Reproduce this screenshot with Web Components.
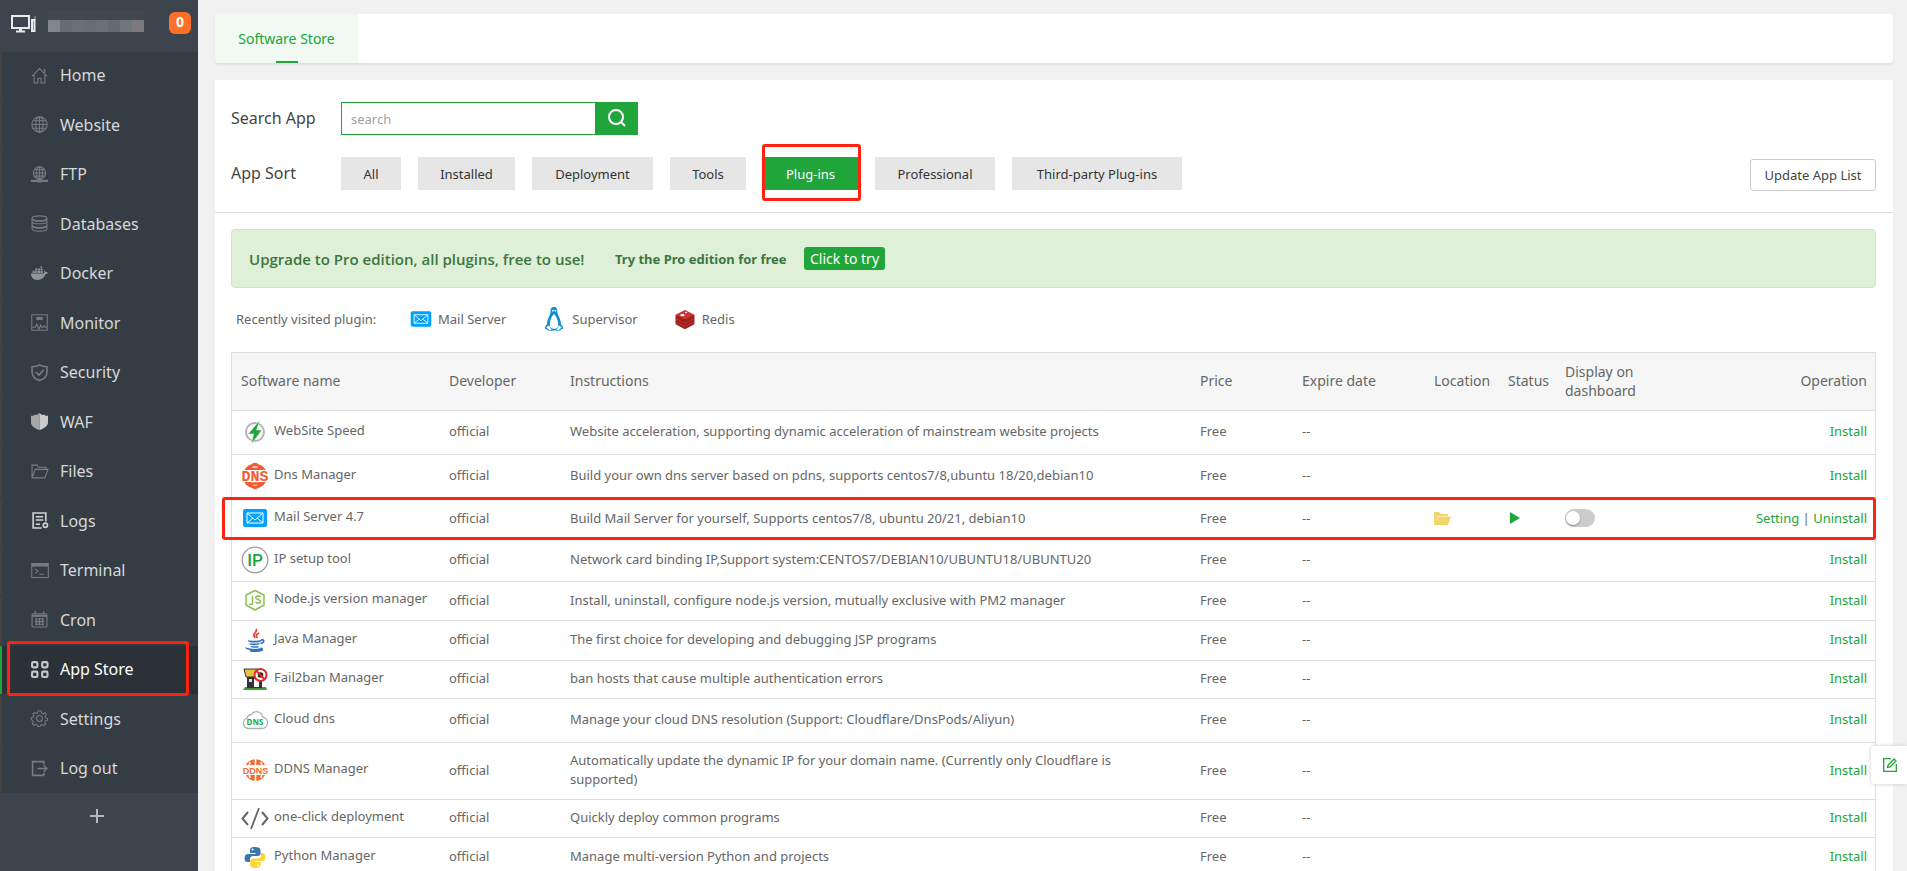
<!DOCTYPE html>
<html lang="en">
<head>
<meta charset="utf-8">
<title>Software Store</title>
<style>
  body { margin: 0; background: #f1f1f1; color: #666; font: 13px/20px "Noto Sans", "Open Sans", sans-serif; }
</style>
</head>
<body>
<app-shell>
  <side-nav slot="nav"></side-nav>
  <page-tabs></page-tabs>
  <store-card>
    <store-filter slot="filter"></store-filter>
    <promo-banner>
      <span slot="lead">Upgrade to Pro edition, all plugins, free to use!</span>
      <span slot="offer">Try the Pro edition for free</span>
      <span slot="action">Click to try</span>
    </promo-banner>
    <recent-plugins></recent-plugins>
    <plugin-table></plugin-table>
  </store-card>
  <feedback-tab slot="float"></feedback-tab>
</app-shell>

<script>
const define = (name, css, html, init) => customElements.define(name, class extends HTMLElement {
  connectedCallback() {
    if (this.shadowRoot) return;
    const root = this.attachShadow({ mode: 'open' });
    const tpl = document.createElement('template');
    tpl.innerHTML = `<style>*{box-sizing:border-box}${css}</style>${typeof html === 'function' ? html(this) : html}`;
    root.append(tpl.content.cloneNode(true));
    if (init) init(root, this);
  }
});

/* Line icons of the sidebar, on a 16px grid */
const NAV = {
  home: '<path d="M1 8.5 8 1.5l7 7M3 7.5V15h3.5v-4.500h3V15H13V7.500M11.500 2.500h1.500v3" />',
  web: '<circle cx="8" cy="8" r="7.200"/><ellipse cx="8" cy="8" rx="3.500" ry="7.200"/><path d="M8 1v14M1 8h14M2 4.500h12M2 11.500h12"/>',
  ftp: '<circle cx="8" cy="6.500" r="5.800"/><ellipse cx="8" cy="6.500" rx="2.800" ry="5.800"/><path d="M8 1v11M2 6.500h12M3 3.500h10M3 9.500h10"/><path d="M0 14h16" stroke-width="2"/><path d="M6 14h4" stroke-width="3"/>',
  db: '<ellipse cx="8" cy="3" rx="7" ry="2.200"/><path d="M1 3v10c0 1.200 3 2.300 7 2.300s7-1.100 7-2.300V3M1 6c0 1.200 3 2.300 7 2.300S15 7.200 15 6M1 9.500c0 1.200 3 2.300 7 2.300s7-1.100 7-2.300"/><path d="M1.500 4.500c2 1.500 11 1.500 13 0M1.500 11c3 2 10 2 13 0" stroke-width="1.500"/>',
  docker: '<g fill="#929598" stroke="none"><path d="M0 8h12c.8-.5.8-2 .2-3 1 .3 1.500 1 1.600 1.700.8-.2 1.600 0 2.200.5-.5 1-1.400 1.300-2.300 1.300C12.500 12 10 14 6 14 2.500 14 0 12 0 8z"/><path d="M1.500 5.500h2v2h-2zM4 5.500h2v2H4zM6.500 5.500h2v2h-2zM9 5.500h2v2H9zM4 3.200h2v1.800H4zM6.500 3.200h2v1.800h-2zM9 1.500h1.500v1.500H9zM9 3.500h2v1.500H9z"/></g>',
  monitor: '<path d="M.700.700h14.600v14.600H.700z"/><path d="M5 3.500h6M5 5h6" stroke-width="1.500"/><path d="M1 12.500h3l1.500-3 2 5 1.500-4 1 2h1.500l1-1.500 1 1.500H15"/>',
  shield: '<path d="M8 .8c2 1.500 4.500 1.800 7 1.800V8c0 4-3 6.200-7 7.400C4 14.200 1 12 1 8V2.600c2.500 0 5-.3 7-1.800z" stroke-width="1.500"/><path d="m4.500 7.500 3 3 4.500-5" stroke-width="1.500"/>',
  waf: '<path d="M8 0v16C3.500 14.800 0 12 0 9V2.500c2 .5 3 0 3.500-1 1 .6 3 .3 4.500-1.500z" fill="#a4a6a8" stroke="none"/><path d="M8 0v16c4.500-1.200 8-4 8-7V2.500c-2 .5-3 0-3.500-1-1 .6-3 .3-4.500-1.500z" fill="#c9cbcc" stroke="none"/>',
  files: '<path d="M1 14V2h5l1 2h7v2M1 14 4 6h12l-3 8z"/>',
  logs: '<path d="M14 9V1H2v14h8M4.500 4.500h7M4.500 7.500h7M4.500 11.500h4" stroke-width="1.500"/><circle cx="13.500" cy="12.500" r="2" stroke-width="1.500"/>',
  term: '<path d="M.700 1.500h15.600v13H.700z" /><path d="M.700 3h15.600" stroke-width="2.500"/><path d="m4 6.500 2.500 2.300L4 11M8 11.500h4"/>',
  cron: '<rect x="1" y="2.500" width="14" height="12.500" rx="1"/><path d="M1 4.500h14" stroke-width="2"/><path d="M4 0v3M12 0v3M3.500 7.500h9M3.500 10h9M3.500 12.500h9M5 6.500v7M8 6.500v7M11 6.500v7"/>',
  apps: '<g stroke-width="2"><rect x="1" y="1" width="5" height="5" rx="1"/><rect x="10.500" y="1" width="5" height="5" rx="1"/><rect x="1" y="10" width="5" height="5" rx="1"/><rect x="10.500" y="10" width="5" height="5" rx="1"/></g>',
  gear: '<path d="M6.500 1h3l.5 2 1.500.6L13.300 2.600l1 1.600L13.300 6l.3 1.200 2 .8v1.500l-2 .7-.7 1.500.9 1.700-1.600 1.300-1.800-1-1.200.4-.7 1.500h-2l-.8-1.600-1.300-.5-1.800.9-1.300-1.500.9-1.700-.5-1.200-1.500-.8V7.200l1.700-.5.7-1.400-.8-1.600L3.400 2.500 5 3.300 6.200 2.800z"/><circle cx="8" cy="8" r="2.800"/>',
  out: '<path d="M12 4V1.500H1.500v13H12V12" stroke-width="1.500"/><path d="M6 8h9M12 5l3 3-3 3" stroke-width="1.300"/>'
};

/* Product icons, drawn on a 28px grid */
const MAIL = '<rect x="2" y="5" width="24" height="18" rx="2" fill="#00a2ff"/><path d="M6 9h16v10H6zM6 9l8 7 8-7M6 19l6-5M22 19l-6-5" fill="none" stroke="#fff" stroke-width="1"/>';
const T = (x, y, s, c, t, f = 'Noto Sans', w = 700) => `<text x="${x}" y="${y}" font-size="${s}" font-family="${f}" font-weight="${w}" text-anchor="middle" fill="${c}">${t}</text>`;
const APP = {
  speed: '<circle cx="14" cy="14" r="9" fill="none" stroke="#b5b5b5" stroke-width="2"/><path d="M19 2 7 16h5.500l-2 10 10.500-14h-5.500z" fill="#20a53a" stroke="#fff" stroke-width=".500"/>',
  dns: '<g fill="none" stroke="#f4592f" stroke-width="2.500"><path d="M4.500 8.500a11 11 0 0 1 19 0M4.500 19.500a11 11 0 0 0 19 0M8.500 9c1-4 3-7 5.500-7s4.500 3 5.500 7M8.500 19c1 4 3 7 5.500 7s4.500-3 5.500-7M5 7h18M5 21.500h18"/></g><rect x="0" y="8" width="28" height="12" fill="#fff"/>' + T(14, 19, 15, '#f4592f', 'DNS', 'Liberation Mono'),
  mail: MAIL,
  ip: '<circle cx="14" cy="14" r="12.800" fill="#fff" stroke="#a0a0a0" stroke-width="1.300"/>' + T(14, 20, 17, '#20a53a', 'IP', 'Roboto', 500),
  node: '<path d="M14 4.500 23 9v10l-9 5-9-5V9z" fill="none" stroke="#8cc152" stroke-width="1.500" stroke-linejoin="round"/><path d="M11.500 10v7c0 2-2.500 2-3.200.500M19.500 11c-1-1.500-5-1.200-4.700 1 .2 2 4.700 1 4.700 3.500 0 2.200-4.200 2.300-5 .2" fill="none" stroke="#8cc152" stroke-width="1.600"/>',
  java: '<g fill="none" stroke="#2f72b9" stroke-width="1.600"><path d="M8 14.500c-1 1.500 10 1.500 12 0M9 17.500c0 1.200 8 1.200 9.500 0M10 20.300c1 1 6 1 7.500 0M5.500 21.500c-1.500 2 12 3.500 16 .5M9 24.700c3 .6 9 .6 13-1M20 14c4-1 3.500 3-.5 3.500"/></g><path d="M15 3c2.500 3-5 4-1 9M18 7c-3 1.500-3.500 2.500-1.500 5" fill="none" stroke="#e8453c" stroke-width="1.800"/>',
  ban: '<path d="M4 22h21l1 3H2z" fill="#3c9a3c"/><path d="M6 12h15v11H6z" fill="#333"/><path d="M13 14h5v8h-5z" fill="#fff"/><path d="M8 14h3v3H8z" fill="#ddd"/><path d="M3 4h14l4 8H5z" fill="#e8c341" stroke="#333"/><circle cx="19.500" cy="10" r="6" fill="#fff" stroke="#e02b2b" stroke-width="2"/><circle cx="19.500" cy="10" r="2.800" fill="#222"/><path d="m15.500 6 8 8" stroke="#e02b2b" stroke-width="2"/>',
  cloud: '<path d="M7 22.500a5.500 5.500 0 0 1-1-10.500 5 5 0 0 1 4.500-3.500 6 6 0 0 1 11 2.500 5.800 5.800 0 0 1 0 11.500z" fill="none" stroke="#b0b0b0" stroke-width="1.300"/>' + T(14, 19, 8, '#20a53a', 'DNS'),
  ddns: '<circle cx="14.500" cy="14" r="10.800" fill="#f16c30"/><path d="M14.500 3v22M9 6c-1.500 5-1.500 11 0 16M20 6c1.500 5 1.500 11 0 16" fill="none" stroke="#fff" stroke-width="1.600"/><rect x="1" y="9" width="27" height="10" fill="#fff"/>' + T(14.5, 17.5, 9, '#f16c30', 'DDNS', 'Liberation Sans'),
  code: '<path d="m7 8-5.500 6.500L7 21M21 8l5.500 6.500L21 21" fill="none" stroke="#666" stroke-width="2"/><path d="M18 4 10 25" stroke="#666" stroke-width="1.800"/>',
  py: '<path d="M14 4c-4 0-5 1-5 3v3h5.500v1H7c-2.500 0-3.500 2-3.500 4.500S4.500 19 6.500 19H9v-3c0-2 1.200-3 3-3h5c1.500 0 2.500-1 2.500-2.500V7c0-2-2-3-5.500-3z" fill="#3d77a8"/><path d="M14.500 25c4 0 5-1 5-3v-3H14v-1h7.500c2.500 0 3-2 3-4 0-2.500-1-4-3-4H20v2.500c0 2-1.200 3-3 3h-5c-1.500 0-2.800 1-2.800 2.500v4c0 2 2 3 5.300 3z" fill="#ffd43b"/><circle cx="11.500" cy="6.500" r="1" fill="#fff"/><circle cx="17" cy="22.500" r="1" fill="#fff"/>',
  tux: '<path d="M14 1c-3 0-4 2-3.700 5C10.500 10 6.500 13 6.500 20c-1 .7-3 2.500-2 4.500 2 1 4 2.500 6 2.500 1.500-.7 5.500-.7 7 0 2 0 4-1.500 6-2.500 1-2-1-3.800-2-4.500 0-7-4-10-4-14C17.700 3 17 1 14 1z" fill="#0a8fd0"/><path d="M14 9c-2 1-5 7-4.500 13 2 3.500 7 3.500 9 0C19 16 16 10 14 9z" fill="#fff"/><path d="m5.500 23 3-2 3 4.500-2 .8zM22.500 23l-3-2-3 4.500 2 .8z" fill="#fff"/><circle cx="12.700" cy="5" r="1" fill="#fff"/><circle cx="15.500" cy="5" r="1" fill="#fff"/>',
  redis: '<path d="M3 9v11l11 6 11-6V9z" fill="#9d1f1b"/><path d="m3 9 11-5.500L25 9l-11 5.500z" fill="#c93530"/><path d="m3 13.500 11 5.500 11-5.500M3 17.500 14 23l11-5.500" fill="none" stroke="#bf3832" stroke-width="1"/><ellipse cx="11" cy="9.500" rx="2.500" ry="1.300" fill="#fff"/><path d="m14 5.500 3 1-2.500 1z" fill="#fff"/>'
};
const svg = (body, size = 28, box = 28) => `<svg width="${size}" height="${size}" viewBox="0 0 ${box} ${box}" aria-hidden="true">${body}</svg>`;

define('app-shell', `
  :host { display: flex; height: 100vh; overflow: hidden; }
  main { flex: 1; min-width: 0; padding: 14px 14px 0 17px; display: flex; flex-direction: column; gap: 17px; }
  ::slotted(store-card) { flex: 1 0 auto; }
`, '<slot name="nav"></slot><main><slot></slot></main><slot name="float"></slot>');

define('nav-item', `
  :host { display: block; }
  a { display: flex; align-items: center; gap: 12px; height: 48px; padding: 0 0 2px 29px; border-left: 2px solid #453f3e;
      color: #d6d8d9; font-size: 16px; text-decoration: none; position: relative; }
  svg { width: 17px; height: 17px; fill: none; stroke: currentColor; color: #777c80; flex: none; overflow: visible; }
  :host([bright]) svg { color: #d0d2d3; }
  :host([active]) a { background: #2c3138; border-left-color: #20a53a; color: #fff; }
  :host([active]) svg { color: #c5c7c9; }
  .mark { position: absolute; inset: -5px 9px -2px 5px; border: 3px solid #ff2112; border-radius: 3px; pointer-events: none; }
`, el => `<a href="#">${svg(NAV[el.getAttribute('icon')], 17, 16)}<slot></slot>${el.hasAttribute('active') ? '<span class="mark"></span>' : ''}</a>`);

const MENU = [['home', 'Home'], ['web', 'Website'], ['ftp', 'FTP'], ['db', 'Databases'], ['docker', 'Docker'], ['monitor', 'Monitor'],
  ['shield', 'Security'], ['waf', 'WAF'], ['files', 'Files'], ['logs', 'Logs', 'bright'], ['term', 'Terminal'], ['cron', 'Cron'],
  ['apps', 'App Store', 'active'], ['gear', 'Settings'], ['out', 'Log out']];
define('side-nav', `
  :host { display: flex; flex-direction: column; width: 198px; flex: none; background: #3c444d; }
  header { display: flex; align-items: center; height: 52px; padding: 0 7px 14px 11px; }
  .host { flex: none; width: 25px; height: 18px; margin-top: 10px; }
  .name { display: flex; margin: 0 auto 0 12px; padding-top: 14px; }
  .name i { width: 12px; height: 12px; box-shadow: 0 -11px #414850; }
  .badge { width: 22px; height: 22px; margin-top: 8px; border-radius: 6px; background: #ff6f28; color: #fff; font-weight: 700; font-size: 14px; line-height: 20px; text-align: center; }
  nav { display: flex; flex-direction: column; justify-content: space-between; height: 741px; background: #353d44; }
  button { border: 0; background: none; padding: 0; width: 22px; height: 22px; margin: 12px 0 0 86px; color: #b4b6b8; }
  svg { display: block; }
`, `<header>
  <svg class="host" viewBox="0 0 25 18" fill="none" stroke="#e8eaeb" aria-hidden="true"><rect x="1" y="1" width="17" height="12" stroke-width="2"/><path d="M5 16.500h9M8 14.500h3" stroke-width="2"/><path d="M21 5h2.500v11H21z" stroke-width="2"/><path d="M24 1v4" stroke-width="1" opacity=".6"/></svg>
  <span class="name">${['#7f868d', '#696b73', '#6a6f7a', '#676d79', '#6b717a', '#666b70', '#6e787c', '#7d797e'].map(c => `<i style="background:${c}"></i>`).join('')}</span>
  <span class="badge">0</span></header>
  <nav>${MENU.map(([i, t, a = '']) => `<nav-item icon="${i}" ${a}>${t}</nav-item>`).join('')}</nav>
  <button aria-label="Add menu item"><svg width="22" height="22" viewBox="0 0 22 22" aria-hidden="true"><path d="M11 4v14M4 11h14" stroke="currentColor" stroke-width="2"/></svg></button>`);

define('page-tabs', `
  :host { display: flex; height: 49px; flex: none; background: #fff; border-radius: 4px; box-shadow: 0 2px 2px #e0e0e0; }
  a { display: flex; flex-direction: column; align-items: center; justify-content: space-between; padding-top: 15px; width: 143px;
      background: #f0f9f2; color: #20a53a; font-size: 14px; text-decoration: none; border-radius: 4px 0 0 4px; }
  a::after { content: ""; width: 22px; height: 2px; background: #20a53a; }
`, '<a href="#">Software Store</a>');

define('store-card', `
  :host { display: block; background: #fff; }
  .body { padding: 16px 17px 0 16px; }
`, '<slot name="filter"></slot><div class="body"><slot></slot></div>');

const SORTS = [['All', 60], ['Installed', 97], ['Deployment', 121], ['Tools', 76], ['Plug-ins', 95], ['Professional', 120], ['Third-party Plug-ins', 170]];
define('store-filter', `
  :host { display: block; padding: 22px 17px 22px 16px; border-bottom: 1px solid #ddd; }
  .row { display: flex; align-items: center; height: 33px; }
  .row + .row { margin-top: 22px; }
  .cap { width: 110px; flex: none; font-size: 16px; color: #444; padding-bottom: 2px; }
  input { width: 254px; height: 33px; border: 1px solid #20a53a; border-right: 0; padding: 0 9px; font: inherit; color: #444; outline: 0; }
  input::placeholder { color: #a0a0a0; opacity: 1; }
  .go { width: 43px; height: 33px; border: 0; padding: 0 0 2px; background: #20a53a; display: grid; place-items: center; }
  .sorts { display: flex; gap: 17px; flex: 1; }
  button { font: inherit; color: #333; }
  .sort { height: 33px; border: 0; padding: 0; background: #e6e6e6; position: relative; }
  .sort[aria-pressed=true] { background: #20a53a; color: #fff; }
  .mark { position: absolute; inset: -13px -3px -11px -1px; border: 3px solid #ff2112; border-radius: 3px; }
  .update { width: 126px; height: 32px; margin-top: 3px; padding: 0; background: #fff; border: 1px solid #ccc; border-radius: 3px; color: #444; }
`, `<div class="row"><label class="cap" for="q">Search App</label><input id="q" placeholder="search">
  <button class="go" aria-label="Search"><svg width="20" height="20" viewBox="0 0 20 20" fill="none" stroke="#fff" stroke-width="2" aria-hidden="true"><circle cx="9" cy="9" r="7"/><path d="m14 14 4 4"/></svg></button></div>
  <div class="row"><span class="cap">App Sort</span><div class="sorts">${SORTS.map(([t, w]) => `<button class="sort" style="width:${w}px" aria-pressed="${t === 'Plug-ins'}">${t}${t === 'Plug-ins' ? '<span class="mark"></span>' : ''}</button>`).join('')}</div>
  <button class="update">Update App List</button></div>`);

define('promo-banner', `
  :host { display: flex; align-items: center; height: 59px; padding: 0 17px; background: #dff0d8; border: 1px solid #d0e8c2; border-radius: 4px; color: #3c763d; font-weight: 700; box-sizing: border-box; }
  .lead { min-width: 338px; font-family: "Open Sans", sans-serif; font-weight: 600; font-size: 15px; }
  .offer { min-width: 177px; margin: 0 12px 0 28px; }
  button { height: 23px; width: 81px; padding: 0; border: 0; border-radius: 3px; background: #20a53a; color: #fff; font: inherit; font-weight: 400; font-size: 14px; line-height: 20px; }
`, '<span class="lead"><slot name="lead"></slot></span><span class="offer"><slot name="offer"></slot></span><button><slot name="action"></slot></button>');

define('recent-plugins', `
  :host { display: flex; align-items: center; height: 64px; padding: 0 0 2px 5px; box-sizing: border-box; }
  .cap { width: 173px; }
  a { display: flex; align-items: center; gap: 5px; color: inherit; text-decoration: none; }
  a + a { margin-left: 35px; }
`, `<span class="cap">Recently visited plugin:</span>
  <a href="#">${svg(APP.mail, 24)}Mail Server</a><a href="#">${svg(APP.tux, 26)}Supervisor</a><a href="#">${svg(APP.redis, 24)}Redis</a>`);

const ROWS = [
  ['speed', 'WebSite Speed', 'Website acceleration, supporting dynamic acceleration of mainstream website projects', 44],
  ['dns', 'Dns Manager', 'Build your own dns server based on pdns, supports centos7/8,ubuntu 18/20,debian10', 44],
  ['mail', 'Mail Server 4.7', 'Build Mail Server for yourself, Supports centos7/8, ubuntu 20/21, debian10', 41],
  ['ip', 'IP setup tool', 'Network card binding IP,Support system:CENTOS7/DEBIAN10/UBUNTU18/UBUNTU20', 42],
  ['node', 'Node.js version manager', 'Install, uninstall, configure node.js version, mutually exclusive with PM2 manager', 39],
  ['java', 'Java Manager', 'The first choice for developing and debugging JSP programs', 40],
  ['ban', 'Fail2ban Manager', 'ban hosts that cause multiple authentication errors', 38],
  ['cloud', 'Cloud dns', 'Manage your cloud DNS resolution (Support: Cloudflare/DnsPods/Aliyun)', 44],
  ['ddns', 'DDNS Manager', 'Automatically update the dynamic IP for your domain name. (Currently only Cloudflare is supported)', 57],
  ['code', 'one-click deployment', 'Quickly deploy common programs', 38],
  ['py', 'Python Manager', 'Manage multi-version Python and projects', 40]];
define('plugin-table', `
  :host { display: block; }
  table { width: 100%; table-layout: fixed; border-collapse: separate; border-spacing: 0; border: 1px solid #ddd; border-bottom: 0; }
  th, td { padding: 0 8px 2px; text-align: left; vertical-align: middle; font-weight: 400; border-bottom: 1px solid #ddd; }
  th { height: 58px; background: #f6f6f6; font-size: 14px; line-height: 19px; }
  td { line-height: 19px; }
  td:first-child, th:first-child { padding-left: 9px; }
  .op { text-align: right; white-space: nowrap; }
  th.tight { padding-right: 0; }
  td.info { padding-right: 32px; }
  tr { position: relative; }
  .name { display: flex; align-items: center; gap: 5px; white-space: nowrap; }
  .name span { padding-bottom: 3px; }
  svg { display: block; flex: none; }
  a { color: #20a53a; text-decoration: none; }
  input { appearance: none; display: block; width: 30px; height: 18px; margin: 0; border-radius: 9px; background: #ccc; }
  input::before { content: ""; display: block; width: 14px; height: 14px; margin: 2px 1px; border-radius: 7px; background: #fff; box-shadow: 0 1px 2px #888; }
  .mark { position: absolute; inset: -2px -1px 0 -10px; border: 3px solid #ff2112; border-radius: 3px; pointer-events: none; }
`, `<table><colgroup><col style="width:209px"><col style="width:121px"><col><col style="width:102px"><col style="width:132px"><col style="width:74px"><col style="width:57px"><col style="width:100px"><col style="width:218px"></colgroup>
  <thead><tr><th>Software name</th><th>Developer</th><th>Instructions</th><th>Price</th><th>Expire date</th><th class="tight">Location</th><th class="tight">Status</th><th>Display on dashboard</th><th class="op">Operation</th></tr></thead>
  <tbody>${ROWS.map(([i, n, d, h]) => {
    const on = i === 'mail';
    return `<tr style="height:${h}px"><td><div class="name">${svg(APP[i])}<span>${n}</span></div></td><td>official</td><td class="info">${d}</td><td>Free</td><td>--</td>
    <td>${on ? '<a href="#" aria-label="Open folder"><svg width="17" height="14" viewBox="0 0 17 14" aria-hidden="true"><path d="M0 14V1h5l2 2h7v2H4L1.500 14zM4.500 5.500H17L14 14H1z" fill="#efd56a"/></svg></a>' : ''}</td>
    <td>${on ? '<svg width="12" height="12" viewBox="0 0 12 12" aria-hidden="true"><path d="M2 0v12l10-6z" fill="#20a53a"/></svg>' : ''}</td>
    <td>${on ? '<input type="checkbox" aria-label="Display on dashboard">' : ''}</td>
    <td class="op">${on ? '<a href="#">Setting</a> | <a href="#">Uninstall</a><span class="mark"></span>' : '<a href="#">Install</a>'}</td></tr>`;
  }).join('')}</tbody></table>`);

define('feedback-tab', `
  :host { position: fixed; right: 0; top: 746px; }
  button { width: 36px; height: 38px; border: 0; padding: 0 0 0 2px; background: #fff; border-radius: 4px 0 0 4px; box-shadow: 0 0 4px #ccc; display: grid; place-items: center; }
`, '<button aria-label="Feedback"><svg width="14" height="14" viewBox="0 0 14 14" fill="none" stroke="#20a53a" aria-hidden="true"><path d="M8 .700H.700v12.600h12.600V6M4.500 9.500 5 7.200 11 1l2 2-6 6z" stroke-width="1.300"/></svg></button>');
</script>
</body>
</html>
